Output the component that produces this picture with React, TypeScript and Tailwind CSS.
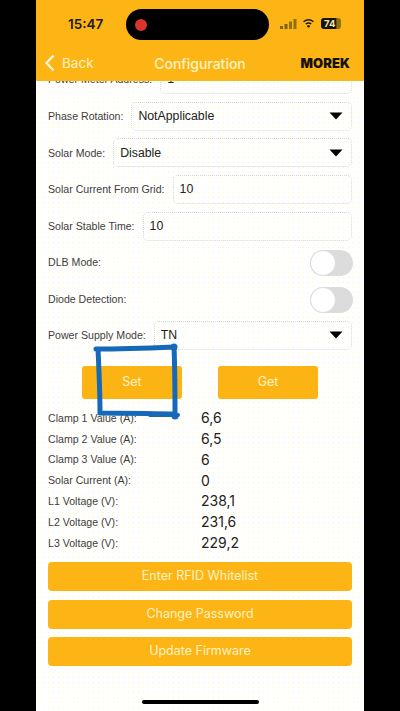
import React from "react";

const font = { fontFamily: '"Inter", "Liberation Sans", sans-serif' };
const labelFont = { fontFamily: '"Liberation Sans", "Inter", sans-serif' };

function Caret() {
  return (
    <svg width="14" height="8" viewBox="0 0 14 8" className="shrink-0">
      <path d="M0.5 0.5H13.5L7 7.5Z" fill="#000" />
    </svg>
  );
}

function Label({ children, className = "" }: { children: string; className?: string }) {
  return (
    <span style={labelFont} className={`text-[10.6px] leading-none text-[#3d3d3d] whitespace-nowrap ${className}`}>
      {children}
    </span>
  );
}

function Field({ label, value, select }: { label: string; value: string; select?: boolean }) {
  return (
    <div className="flex items-center h-[29px] gap-[8px]">
      <Label>{label}</Label>
      <div
        style={labelFont}
        className="flex-1 h-full flex items-center justify-between pl-[6px] pr-[8px] border border-dotted border-[#d6d6dc] rounded-[5px] text-[12.3px] text-[#222]"
      >
        <span>{value}</span>
        {select && <Caret />}
      </div>
    </div>
  );
}

function Toggle({ label }: { label: string }) {
  return (
    <div className="flex items-center justify-between h-[26px]">
      <Label>{label}</Label>
      <div className="w-[43px] h-[26px] -mr-[1px] rounded-full bg-[#dcdcdc] relative">
        <div className="absolute left-0 top-0 w-[26px] h-[26px] rounded-full bg-white border border-[#dcdce6]" />
      </div>
    </div>
  );
}

function Reading({ label, value }: { label: string; value: string }) {
  return (
    <div className="flex items-center h-[20.8px]">
      <Label className="w-[153px]">{label}</Label>
      <span className="text-[14px] leading-none text-[#222]">{value}</span>
    </div>
  );
}

function WideButton({ children }: { children: string }) {
  return (
    <div className="h-[29px] rounded-[4px] bg-[#fdb515] flex items-center justify-center text-[12.5px] text-[#fff3c4]">
      {children}
    </div>
  );
}

function Scribble() {
  return (
    <svg className="absolute left-[90px] top-[340px]" width="95" height="85" viewBox="0 0 95 85" fill="none">
      <path
        d="M6 9C30 9 60 8 84 7C85 30 85 55 85 74C65 74 40 73 10 73C10 55 9 30 8 9"
        stroke="#1668b8"
        strokeWidth="5"
        strokeLinejoin="round"
        strokeLinecap="round"
      />
      <path d="M60 75L88 75" stroke="#1668b8" strokeWidth="4" strokeLinecap="round" />
      <circle cx="84" cy="7" r="3.5" fill="#1668b8" />
      <circle cx="85" cy="76" r="3.5" fill="#1668b8" />
    </svg>
  );
}

export default function App() {
  return (
    <div className="w-[400px] h-[711px] bg-black flex justify-center overflow-hidden relative" style={font}>
      <div className="w-[328px] h-full bg-white bg-[radial-gradient(circle,#fff7ad_0.7px,transparent_0.9px)] bg-[length:5px_5px] flex flex-col">
        <header className="h-[81px] shrink-0 bg-[#fdb515] flex flex-col z-10">
          <div className="h-[47px] relative">
            <span className="absolute left-[32px] top-[15px] text-[13.5px] font-semibold text-[#1c1a10] leading-[18px]">15:47</span>
            <div className="absolute left-[90px] top-[9px] w-[143px] h-[31px] rounded-full bg-black flex items-center pl-[9px]">
              <div className="w-[12px] h-[12px] rounded-full bg-[#d9352c]" />
            </div>
            <div className="absolute left-[244px] top-[18px] flex items-center gap-[5px]">
              <svg width="17" height="11" viewBox="0 0 17 11">
                <rect x="0" y="8" width="3" height="3" fill="#7d6212" />
                <rect x="4.5" y="6" width="3" height="5" fill="#7d6212" />
                <rect x="9" y="3.5" width="3" height="7.5" fill="#8f7015" />
                <rect x="13.5" y="1" width="3" height="10" fill="#8f7015" />
              </svg>
              <svg width="13" height="9" viewBox="0 0 13 9" fill="none">
                <path d="M1.5 2.8C4.5 0.4 8.5 0.4 11.5 2.8" stroke="#1c1a10" strokeWidth="1.4" />
                <path d="M3.7 5C5.3 3.8 7.7 3.8 9.3 5" stroke="#1c1a10" strokeWidth="1.4" />
                <circle cx="6.5" cy="7.2" r="1.3" fill="#1c1a10" />
              </svg>
              <div className="ml-[1px] w-[20px] h-[11px] rounded-[3px] bg-[linear-gradient(90deg,#15130a_72%,#8f7015_80%)] text-[#f5e6b0] text-[9.5px] font-bold leading-[11px] pl-[3px]">
                74
              </div>
            </div>
          </div>
          <div className="h-[32px] flex items-center justify-between relative pl-[9px] pr-[14px]">
            <div className="flex items-center gap-[7px] text-[#fff3c4]">
              <svg width="10" height="18" viewBox="0 0 10 18" fill="none">
                <path d="M8.5 1.5L1.5 9L8.5 16.5" stroke="#fff8dc" strokeWidth="2.2" />
              </svg>
              <span className="text-[13.5px]">Back</span>
            </div>
            <span className="absolute left-0 right-0 text-center text-[14px] font-medium text-[#fff3c4]">Configuration</span>
            <span className="pt-[1px] text-[13px] font-black text-[#14120a] tracking-[0.1px]">MOREK</span>
          </div>
        </header>

        <main className="flex-1 overflow-hidden px-[12px] relative">
          <div className="-mt-[16px] flex flex-col gap-[7.7px]">
            <Field label="Power Meter Address:" value="1" />
            <Field label="Phase Rotation:" value="NotApplicable" select />
            <Field label="Solar Mode:" value="Disable" select />
            <Field label="Solar Current From Grid:" value="10" />
            <Field label="Solar Stable Time:" value="10" />
          </div>
          <div className="mt-[9px] flex flex-col gap-[11px]">
            <Toggle label="DLB Mode:" />
            <Toggle label="Diode Detection:" />
          </div>
          <div className="mt-[8px]">
            <Field label="Power Supply Mode:" value="TN" select />
          </div>
          <div className="mt-[16px] flex justify-center gap-[36px]">
            {["Set", "Get"].map((t) => (
              <div key={t} className="w-[100px] h-[33px] rounded-[3px] bg-[#fcb415] flex items-center justify-center text-[12.5px] text-[#fff3c4]">
                {t}
              </div>
            ))}
          </div>
          <div className="mt-[9px] flex flex-col">
            <Reading label="Clamp 1 Value (A):" value="6,6" />
            <Reading label="Clamp 2 Value (A):" value="6,5" />
            <Reading label="Clamp 3 Value (A):" value="6" />
            <Reading label="Solar Current (A):" value="0" />
            <Reading label="L1 Voltage (V):" value="238,1" />
            <Reading label="L2 Voltage (V):" value="231,6" />
            <Reading label="L3 Voltage (V):" value="229,2" />
          </div>
          <div className="mt-[9px] flex flex-col gap-[8.5px]">
            <WideButton>Enter RFID Whitelist</WideButton>
            <WideButton>Change Password</WideButton>
            <WideButton>Update Firmware</WideButton>
          </div>
        </main>
      </div>
      <Scribble />
      <div className="absolute left-[142px] top-[700px] w-[117px] h-[4px] rounded-full bg-black" />
    </div>
  );
}
